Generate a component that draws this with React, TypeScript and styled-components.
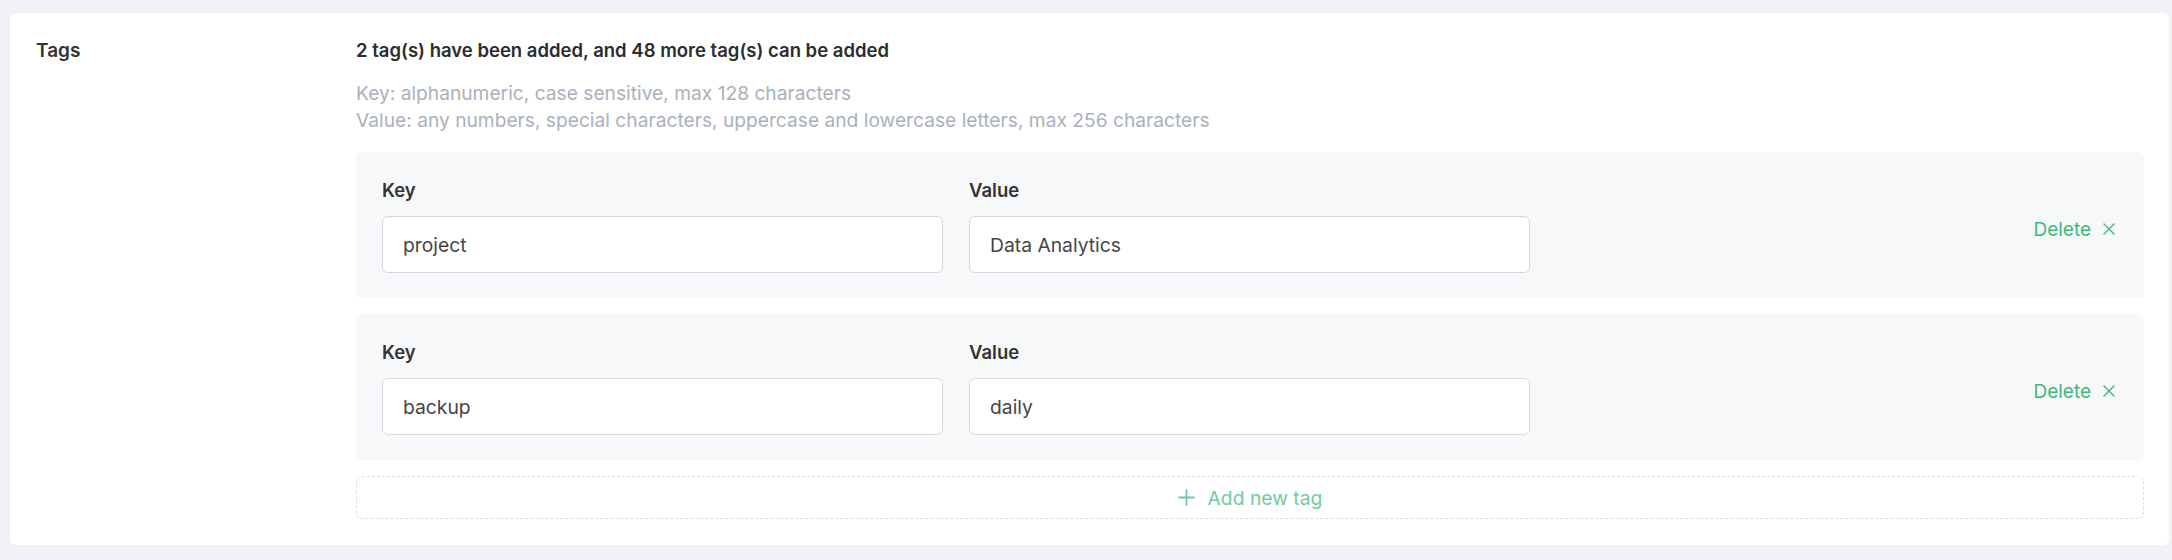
import styled, { createGlobalStyle } from 'styled-components'

const GlobalStyle = createGlobalStyle`
  body {
    margin: 0;
    background: #f0f2f5;
    font-family: Inter, 'Liberation Sans', sans-serif;
  }
`

const Page = styled.div`
  padding: 13px 3px 14px 10px;
`

const Card = styled.section`
  display: grid;
  grid-template-columns: 320px 1fr;
  background: #fff;
  border-radius: 6px;
  padding: 24px 25px 26px 26px;
`

const SectionLabel = styled.div`
  font-size: 19px;
  line-height: 27px;
  font-weight: 600;
  color: #333;
`

const Content = styled.div`
  display: flex;
  flex-direction: column;
`

const Summary = styled.div`
  font-size: 18.5px;
  line-height: 27px;
  font-weight: 600;
  color: #2b2c2e;
`

const Hint = styled.div`
  margin-top: 16px;
  font-size: 19.2px;
  line-height: 27px;
  color: #a9b1bc;
`

const TagList = styled.div`
  display: flex;
  flex-direction: column;
  gap: 16px;
  margin-top: 18px;
`

const TagRow = styled.div`
  display: flex;
  align-items: center;
  background: #f7f8fa;
  border-radius: 6px;
  padding: 25px 29px 25px 26px;
`

const Fields = styled.div`
  display: grid;
  grid-template-columns: 561px 561px;
  column-gap: 26px;
`

const Field = styled.label`
  display: flex;
  flex-direction: column;
`

const FieldLabel = styled.span`
  font-size: 18.5px;
  line-height: 27px;
  font-weight: 600;
  color: #333;
  margin-bottom: 12px;
`

const Input = styled.input`
  box-sizing: border-box;
  height: 57px;
  width: 100%;
  border: 1px solid #d5d9df;
  border-radius: 6px;
  background: #fff;
  padding: 0 20px;
  font-family: inherit;
  font-size: 19.3px;
  color: #454545;
  outline: none;
`

const DeleteButton = styled.button`
  margin-left: auto;
  margin-top: 8px;
  display: flex;
  align-items: center;
  gap: 12px;
  border: none;
  background: none;
  padding: 0;
  font-family: inherit;
  font-size: 19px;
  line-height: 27px;
  color: #3fb97b;
  cursor: pointer;
`

const AddButton = styled.button`
  margin-top: 16px;
  height: 43px;
  display: flex;
  align-items: center;
  justify-content: center;
  gap: 13px;
  border: 1px dashed #dcdfe3;
  border-radius: 6px;
  background: #fff;
  font-family: inherit;
  font-size: 19.3px;
  color: #72cb9e;
  cursor: pointer;
`

const tags = [
  { key: 'project', value: 'Data Analytics' },
  { key: 'backup', value: 'daily' },
]

const CloseIcon = () => (
  <svg width="12" height="12" viewBox="0 0 12 12" fill="none">
    <path d="M1 1L11 11M11 1L1 11" stroke="currentColor" strokeWidth="1.4" strokeLinecap="round" />
  </svg>
)

const PlusIcon = () => (
  <svg width="17" height="17" viewBox="0 0 17 17" fill="none">
    <path d="M8.5 1V16M1 8.5H16" stroke="currentColor" strokeWidth="1.8" strokeLinecap="round" />
  </svg>
)

const App = () => {
  const maxTags = 50

  return (
    <Page>
      <GlobalStyle />
      <Card>
        <SectionLabel>Tags</SectionLabel>
        <Content>
          <Summary>
            {tags.length} tag(s) have been added, and {maxTags - tags.length} more tag(s) can be added
          </Summary>
          <Hint>
            Key: alphanumeric, case sensitive, max 128 characters
            <br />
            Value: any numbers, special characters, uppercase and lowercase letters, max 256 characters
          </Hint>
          <TagList>
            {tags.map(tag => (
              <TagRow key={tag.key}>
                <Fields>
                  <Field>
                    <FieldLabel>Key</FieldLabel>
                    <Input defaultValue={tag.key} />
                  </Field>
                  <Field>
                    <FieldLabel>Value</FieldLabel>
                    <Input defaultValue={tag.value} />
                  </Field>
                </Fields>
                <DeleteButton>
                  Delete
                  <CloseIcon />
                </DeleteButton>
              </TagRow>
            ))}
          </TagList>
          <AddButton>
            <PlusIcon />
            Add new tag
          </AddButton>
        </Content>
      </Card>
    </Page>
  )
}

export default App
